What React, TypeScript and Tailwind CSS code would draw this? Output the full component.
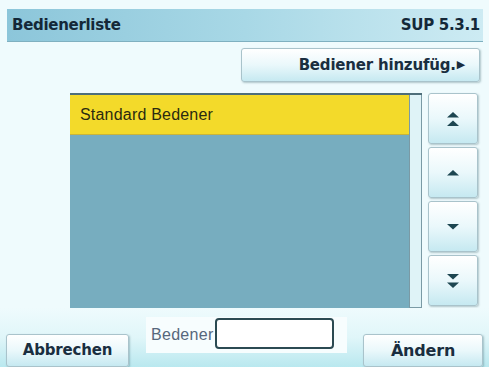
import React from "react";

const btn =
  "border border-[#a9c3cb] rounded-[3px] bg-gradient-to-b from-[#ffffff] via-[#eaf8fb] to-[#c6e9f1] shadow-[1px_1px_2px_rgba(60,100,110,0.35)]";

function Arrow({ dir, double }: { dir: "up" | "down"; double?: boolean }) {
  const up = "M1 6.5 L7 1 L13 6.5 Z";
  const down = "M1 1 L7 6.5 L13 1 Z";
  const d = dir === "up" ? up : down;
  return (
    <svg width="14" height={double ? 16 : 8} viewBox={double ? "0 0 14 16" : "0 0 14 8"}>
      <path d={d} fill="#1d4651" />
      {double && <path d={d} transform="translate(0 8.5)" fill="#1d4651" />}
    </svg>
  );
}

export default function App() {
  return (
    <div
      className="w-[489px] h-[370px] bg-[#effbfd] flex flex-col overflow-hidden"
      style={{ fontFamily: "'DejaVu Sans', Verdana, sans-serif" }}
    >
      {/* Title bar */}
      <div className="mt-[9px] ml-[7px] mr-[6px] h-[33px] flex items-center justify-between pl-[5px] pr-[3px] bg-gradient-to-r from-[#8cc6da] via-[#a8d8e6] to-[#cdebf3] border-b border-[#7fb0c0]">
        <span className="text-[15px] font-bold text-[#142838] tracking-[-0.3px]">Bedienerliste</span>
        <span className="text-[15px] font-bold text-[#142838] tracking-[-0.3px]">SUP 5.3.1</span>
      </div>

      {/* Add button */}
      <div className="mt-[6px] flex justify-end pr-[9px]">
        <div className={`${btn} w-[239px] h-[34px] flex items-center justify-end pr-[14px] text-[15px] font-bold text-[#1a2e40] tracking-[-0.2px]`}>
          Bediener hinzufüg.
          <span className="ml-[1px] text-[11px]">▶</span>
        </div>
      </div>

      {/* List + scroll buttons */}
      <div className="mt-[11px] ml-[70px] flex h-[215px]">
        <div className="w-[352px] flex border-t-2 border-[#4e6e7a]">
          <div className="w-[339px] bg-[#77adbf] flex flex-col">
            <div
              className="h-[40px] bg-[#f3da2a] flex items-center pl-[10px] text-[16px] text-[#2a2a10] border-b border-[#c9b43a] tracking-[0.2px]"
              style={{ fontFamily: "'Liberation Sans', Arial, sans-serif" }}
            >
              Standard Bedener
            </div>
          </div>
          <div className="w-[13px] bg-[#dff3f7] border-x border-b border-[#7a9aa5]" />
        </div>
        <div className="ml-[6px] w-[50px] flex flex-col gap-[3px]">
          <div className={`${btn} h-[51px] flex items-center justify-center`}>
            <Arrow dir="up" double />
          </div>
          <div className={`${btn} h-[51px] flex items-center justify-center`}>
            <Arrow dir="up" />
          </div>
          <div className={`${btn} h-[51px] flex items-center justify-center`}>
            <Arrow dir="down" />
          </div>
          <div className={`${btn} h-[51px] flex items-center justify-center`}>
            <Arrow dir="down" double />
          </div>
        </div>
      </div>

      {/* Bottom bar */}
      <div className="flex-1 flex flex-col">
        <div className="flex-1 flex items-end px-[6px] bg-gradient-to-b from-[#effbfd] via-[#e0f6f9] to-[#b9e8ef]">
          <div
            className={`${btn} w-[123px] h-[33px] flex items-center justify-center text-[15px] font-bold text-[#1a2e40] tracking-[-0.2px]`}
          >
            Abbrechen
          </div>
          <div className="ml-[17px] mb-[14px] w-[201px] h-[36px] bg-[#f7fdfe] flex items-center pl-[5px]">
            <span
              className="text-[16px] text-[#56677c] tracking-[0.3px]"
              style={{ fontFamily: "'Liberation Sans', Arial, sans-serif" }}
            >
              Bedener
            </span>
            <div className="ml-[1px] w-[119px] h-[31px] -mt-[4px] border-2 border-[#2b4a52] rounded-[4px] bg-white" />
          </div>
          <div
            className={`${btn} ml-auto w-[120px] h-[33px] flex items-center justify-center text-[16px] font-bold text-[#1a2e40] tracking-[-0.2px]`}
          >
            Ändern
          </div>
        </div>
        <div className="h-[3px] bg-white" />
      </div>
    </div>
  );
}
